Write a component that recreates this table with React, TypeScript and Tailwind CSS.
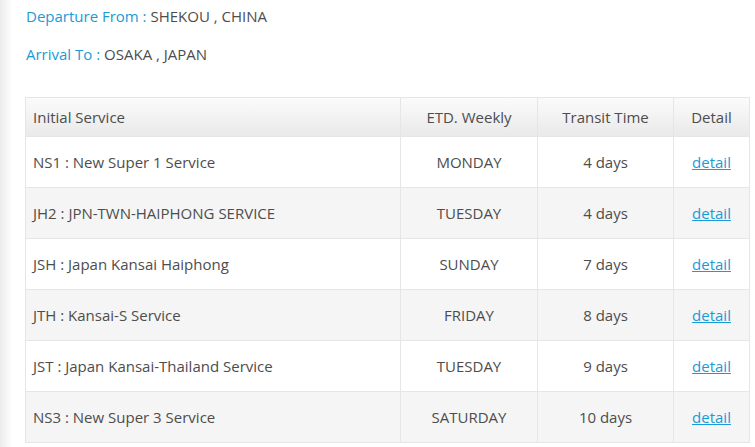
const rows = [
  { name: 'NS1 : New Super 1 Service', day: 'MONDAY', time: '4 days' },
  { name: 'JH2 : JPN-TWN-HAIPHONG SERVICE', day: 'TUESDAY', time: '4 days' },
  { name: 'JSH : Japan Kansai Haiphong', day: 'SUNDAY', time: '7 days' },
  { name: 'JTH : Kansai-S Service', day: 'FRIDAY', time: '8 days' },
  { name: 'JST : Japan Kansai-Thailand Service', day: 'TUESDAY', time: '9 days' },
  { name: 'NS3 : New Super 3 Service', day: 'SATURDAY', time: '10 days' },
];

export default function App() {
  return (
    <div className="flex w-[755px] h-[447px] overflow-hidden bg-white text-[15px] text-[#4d4d4d]" style={{ fontFamily: '"Open Sans", "Noto Sans", sans-serif' }}>
      <div className="w-[12px] shrink-0 bg-gradient-to-r from-[#ececec] to-white" />
      <div className="flex-1 pt-[6px] pl-[13px] pr-[6px]">
        <p className="leading-[20px] pl-px">
          <span className="text-[#1a9ad6]">Departure From :</span> SHEKOU , CHINA
        </p>
        <p className="leading-[20px] mt-[18px] pl-px">
          <span className="text-[#1a9ad6]">Arrival To :</span> OSAKA , JAPAN
        </p>
        <table className="mt-[33px] w-[725px] border-collapse border border-[#e6e6e6]">
          <thead>
            <tr className="h-[39px] bg-gradient-to-b from-[#fbfbfb] to-[#e9e9e9]">
              <th className="w-[375px] border border-[#e6e6e6] px-[7px] text-left font-normal">Initial Service</th>
              <th className="w-[137px] border border-[#e6e6e6] font-normal">ETD. Weekly</th>
              <th className="w-[136px] border border-[#e6e6e6] font-normal">Transit Time</th>
              <th className="border border-[#e6e6e6] font-normal">Detail</th>
            </tr>
          </thead>
          <tbody>
            {rows.map((r, i) => (
              <tr key={r.name} className={`h-[51px] ${i % 2 === 1 ? 'bg-[#f5f5f5]' : 'bg-white'}`}>
                <td className="border border-[#e6e6e6] px-[7px]">{r.name}</td>
                <td className="border border-[#e6e6e6] text-center">{r.day}</td>
                <td className="border border-[#e6e6e6] text-center">{r.time}</td>
                <td className="border border-[#e6e6e6] text-center">
                  <a href="#" className="text-[#1a9ad6] underline">detail</a>
                </td>
              </tr>
            ))}
          </tbody>
        </table>
      </div>
    </div>
  );
}
